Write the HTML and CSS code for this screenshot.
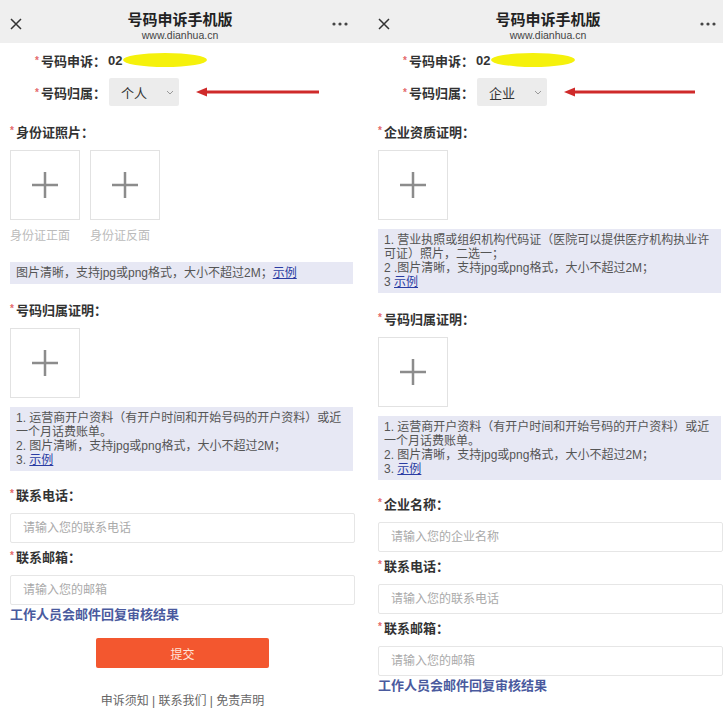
FILE: index.html
```html
<!DOCTYPE html>
<html lang="zh-CN">
  <head>
    <meta charset="UTF-8" />
    <meta name="viewport" content="width=device-width, initial-scale=1.0" />
    <title>号码申诉手机版</title>
    <link rel="stylesheet" href="styles.css">
  </head>
  <body>
    <!-- personal -->
    <div class="phone">
      <div class="top-bar">
        <span class="close-icon">
          <svg width="12" height="12" viewBox="0 0 12 12"><path d="M1 1L11 11M11 1L1 11" stroke="#333" stroke-width="1.5" fill="none"/></svg>
        </span>
        <div class="top-title">
          <div class="title">号码申诉手机版</div>
          <div class="site">www.dianhua.cn</div>
        </div>
        <span class="more-icon">
          <svg width="16" height="4" viewBox="0 0 16 4"><circle cx="2" cy="2" r="1.6" fill="#444"/><circle cx="8" cy="2" r="1.6" fill="#444"/><circle cx="14" cy="2" r="1.6" fill="#444"/></svg>
        </span>
      </div>

      <div class="form">
        <div class="head-row number-row">
          <span class="head-label"><i class="req">*</i>号码申诉：</span>
          <span class="number">02</span><span class="mask"></span>
        </div>
        <div class="head-row owner-row">
          <span class="head-label"><i class="req">*</i>号码归属：</span>
          <div class="select">个人
            <svg width="8" height="5" viewBox="0 0 8 5"><path d="M1 1L4 4L7 1" stroke="#999" stroke-width="1" fill="none"/></svg>
          </div>
          <svg class="arrow" width="124" height="10" viewBox="0 0 124 10"><path d="M9 5H123" stroke="#cf2a2a" stroke-width="3"/><path d="M0 5L11 0.5V9.5Z" fill="#cf2a2a"/></svg>
        </div>

        <div class="section">
          <div class="label"><i class="req">*</i>身份证照片：</div>
          <div class="uploads">
            <div class="upload-item">
              <div class="upload-box"><svg width="28" height="28" viewBox="0 0 28 28"><path d="M14 1V27M1 14H27" stroke="#8c8c8c" stroke-width="2.5"/></svg></div>
              <div class="caption">身份证正面</div>
            </div>
            <div class="upload-item">
              <div class="upload-box"><svg width="28" height="28" viewBox="0 0 28 28"><path d="M14 1V27M1 14H27" stroke="#8c8c8c" stroke-width="2.5"/></svg></div>
              <div class="caption">身份证反面</div>
            </div>
          </div>
          <div class="tips">图片清晰，支持jpg或png格式，大小不超过2M；<a href="#">示例</a></div>
        </div>

        <div class="section">
          <div class="label"><i class="req">*</i>号码归属证明：</div>
          <div class="upload-box"><svg width="28" height="28" viewBox="0 0 28 28"><path d="M14 1V27M1 14H27" stroke="#8c8c8c" stroke-width="2.5"/></svg></div>
          <div class="tips">1. 运营商开户资料（有开户时间和开始号码的开户资料）或近一个月话费账单。<br>2. 图片清晰，支持jpg或png格式，大小不超过2M；<br>3. <a href="#">示例</a></div>
        </div>

        <div class="field first-field">
          <div class="label"><i class="req">*</i>联系电话：</div>
          <input type="text" placeholder="请输入您的联系电话" />
        </div>
        <div class="field">
          <div class="label"><i class="req">*</i>联系邮箱：</div>
          <input type="text" placeholder="请输入您的邮箱" />
        </div>
        <div class="note">工作人员会邮件回复审核结果</div>
        <button class="submit">提交</button>
        <div class="footer">申诉须知 | 联系我们 | 免责声明</div>
      </div>
    </div>

    <!-- company -->
    <div class="phone">
      <div class="top-bar">
        <span class="close-icon">
          <svg width="12" height="12" viewBox="0 0 12 12"><path d="M1 1L11 11M11 1L1 11" stroke="#333" stroke-width="1.5" fill="none"/></svg>
        </span>
        <div class="top-title">
          <div class="title">号码申诉手机版</div>
          <div class="site">www.dianhua.cn</div>
        </div>
        <span class="more-icon">
          <svg width="16" height="4" viewBox="0 0 16 4"><circle cx="2" cy="2" r="1.6" fill="#444"/><circle cx="8" cy="2" r="1.6" fill="#444"/><circle cx="14" cy="2" r="1.6" fill="#444"/></svg>
        </span>
      </div>

      <div class="form">
        <div class="head-row number-row">
          <span class="head-label"><i class="req">*</i>号码申诉：</span>
          <span class="number">02</span><span class="mask"></span>
        </div>
        <div class="head-row owner-row">
          <span class="head-label"><i class="req">*</i>号码归属：</span>
          <div class="select">企业
            <svg width="8" height="5" viewBox="0 0 8 5"><path d="M1 1L4 4L7 1" stroke="#999" stroke-width="1" fill="none"/></svg>
          </div>
          <svg class="arrow" width="132" height="10" viewBox="0 0 132 10"><path d="M9 5H131" stroke="#cf2a2a" stroke-width="3"/><path d="M0 5L11 0.5V9.5Z" fill="#cf2a2a"/></svg>
        </div>

        <div class="section">
          <div class="label"><i class="req">*</i>企业资质证明：</div>
          <div class="upload-box"><svg width="28" height="28" viewBox="0 0 28 28"><path d="M14 1V27M1 14H27" stroke="#8c8c8c" stroke-width="2.5"/></svg></div>
          <div class="tips">1. 营业执照或组织机构代码证（医院可以提供医疗机构执业许可证）照片，二选一；<br>2 .图片清晰，支持jpg或png格式，大小不超过2M；<br>3 <a href="#">示例</a></div>
        </div>

        <div class="section">
          <div class="label"><i class="req">*</i>号码归属证明：</div>
          <div class="upload-box"><svg width="28" height="28" viewBox="0 0 28 28"><path d="M14 1V27M1 14H27" stroke="#8c8c8c" stroke-width="2.5"/></svg></div>
          <div class="tips">1. 运营商开户资料（有开户时间和开始号码的开户资料）或近一个月话费账单。<br>2. 图片清晰，支持jpg或png格式，大小不超过2M；<br>3. <a href="#">示例</a></div>
        </div>

        <div class="field first-field">
          <div class="label"><i class="req">*</i>企业名称：</div>
          <input type="text" placeholder="请输入您的企业名称" />
        </div>
        <div class="field">
          <div class="label"><i class="req">*</i>联系电话：</div>
          <input type="text" placeholder="请输入您的联系电话" />
        </div>
        <div class="field">
          <div class="label"><i class="req">*</i>联系邮箱：</div>
          <input type="text" placeholder="请输入您的邮箱" />
        </div>
        <div class="note">工作人员会邮件回复审核结果</div>
        <button class="submit"></button>
      </div>
    </div>
  </body>
</html>
```

FILE: styles.css
```css
/* Reset default margin and padding */
html,
body {
  margin: 0;
  padding: 0;
}

/* Basic styling */
body {
  font-family: "Liberation Sans", "Noto Sans CJK SC", sans-serif;
  color: #333;
  background-color: #ffffff;
  display: flex;
  width: 723px;
  height: 709px;
  overflow: hidden;
}

.phone {
  flex: 0 0 368px;
  background-color: #ffffff;
}

/* Top bar */
.top-bar {
  display: grid;
  grid-template-columns: 40px 1fr 40px;
  align-items: start;
  height: 43px;
  padding-right: 8px;
  background-color: #efefef;
}

.close-icon {
  display: flex;
  padding: 18px 0 0 10px;
}

.more-icon {
  display: flex;
  justify-self: end;
  margin: 22px 12px 0 0;
}

.top-title {
  text-align: center;
  padding-top: 11px;
}

.title {
  font-size: 15px;
  line-height: 18px;
  font-weight: bold;
  color: #222;
}

.site {
  font-size: 10.5px;
  line-height: 12px;
  color: #444;
}

/* Form */
.form {
  padding: 0 13px 0 10px;
}

.req {
  font-style: normal;
  font-size: 10px;
  line-height: 1;
  color: #e46a6a;
  margin-right: 2px;
  position: relative;
  top: -2px;
}

.head-row {
  display: flex;
  align-items: center;
  padding-left: 25px;
  font-size: 13px;
}

.number-row {
  height: 22px;
  margin-top: 6px;
}

.owner-row {
  height: 28px;
  margin-top: 7px;
}

.head-label {
  font-weight: bold;
  color: #333;
}

.number {
  font-weight: bold;
  margin-left: 2px;
}

.mask {
  display: inline-block;
  width: 84px;
  height: 14px;
  margin-left: 1px;
  border-radius: 50%;
  background-color: #f5f10c;
  filter: blur(0.6px);
}

.select {
  display: flex;
  align-items: center;
  justify-content: space-between;
  box-sizing: border-box;
  width: 70px;
  height: 28px;
  margin-left: 3px;
  padding: 0 5px 0 12px;
  background-color: #ececec;
  border-radius: 2px;
  color: #333;
}

.arrow {
  margin-left: 17px;
}

.section {
  margin-top: 18px;
}

.label {
  display: flex;
  align-items: center;
  height: 18px;
  font-size: 13px;
  line-height: 18px;
  font-weight: bold;
  color: #333;
  margin-bottom: 8px;
}

.uploads {
  display: flex;
  gap: 10px;
}

.upload-box {
  display: flex;
  align-items: center;
  justify-content: center;
  box-sizing: border-box;
  width: 70px;
  height: 70px;
  border: 1px solid #e2e2e2;
}

.caption {
  font-size: 12px;
  line-height: 16px;
  height: 16px;
  color: #bbbbbb;
  margin: 8px 0 9px;
}

.tips {
  margin: 9px 2px 0 0;
  padding: 4px 6px;
  background-color: #e7e8f4;
  font-size: 12px;
  line-height: 14px;
  color: #555;
}

.tips a {
  color: #2b3da3;
}

.field {
  margin-top: 6px;
}

.first-field {
  margin-top: 16px;
}

.field input {
  display: block;
  box-sizing: border-box;
  width: 100%;
  height: 30px;
  padding: 0 12px;
  border: 1px solid #e6e6e6;
  border-radius: 2px;
  font-family: "Liberation Sans", "Noto Sans CJK SC", sans-serif;
  font-size: 12px;
}

.field input::placeholder {
  color: #aaaaaa;
}

.note {
  margin-top: 1px;
  height: 18px;
  font-size: 13px;
  line-height: 18px;
  font-weight: bold;
  color: #4a5a9e;
}

.submit {
  display: block;
  width: 173px;
  height: 30px;
  margin: 14px auto 0;
  border: none;
  border-radius: 2px;
  background-color: #f3572f;
  color: #ffe4da;
  font-family: "Liberation Sans", "Noto Sans CJK SC", sans-serif;
  font-size: 12px;
}

.footer {
  margin-top: 24px;
  text-align: center;
  font-size: 12px;
  line-height: 18px;
  color: #666;
}
```
